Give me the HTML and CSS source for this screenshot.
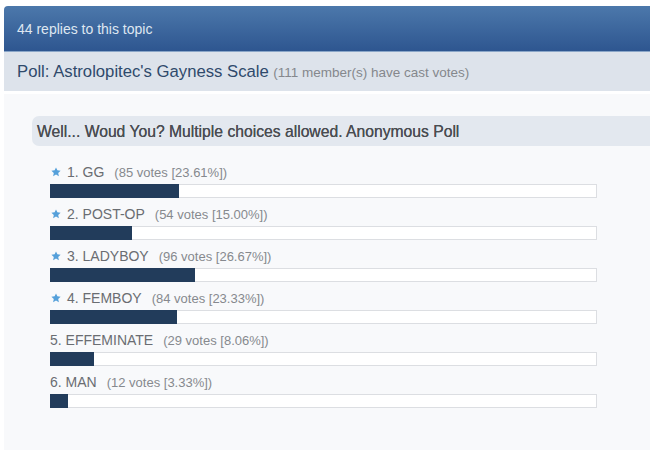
FILE: index.html
```html
<!DOCTYPE html>
<html lang="en">

<head>
    <meta charset="UTF-8">
    <meta name="viewport" content="width=device-width, initial-scale=1.0">
    <title>44 replies to this topic</title>
    <link rel="stylesheet" href="styles.css">
</head>

<body>
    <div class="topic">
        <div class="topic-head">44 replies to this topic</div>
        <div class="poll-title">
            <span class="poll-name">Poll: Astrolopitec's Gayness Scale</span>
            <span class="poll-count">(111 member(s) have cast votes)</span>
        </div>
        <div class="poll-body">
            <div class="question">Well... Woud You? Multiple choices allowed. Anonymous Poll</div>
            <ul class="choices">
                <li class="choice">
                    <div class="choice-label">
                        <svg class="star" viewBox="0 0 10 10"><path d="M5 0.4 6.4 3.3 9.6 3.7 7.2 5.9 7.9 9.2 5 7.6 2.1 9.2 2.8 5.9 0.4 3.7 3.6 3.3Z"/></svg>
                        <span class="choice-name">1. GG</span>
                        <span class="choice-votes">(85 votes [23.61%])</span>
                    </div>
                    <div class="bar"><div class="bar-fill" style="width: 23.61%"></div></div>
                </li>
                <li class="choice">
                    <div class="choice-label">
                        <svg class="star" viewBox="0 0 10 10"><path d="M5 0.4 6.4 3.3 9.6 3.7 7.2 5.9 7.9 9.2 5 7.6 2.1 9.2 2.8 5.9 0.4 3.7 3.6 3.3Z"/></svg>
                        <span class="choice-name">2. POST-OP</span>
                        <span class="choice-votes">(54 votes [15.00%])</span>
                    </div>
                    <div class="bar"><div class="bar-fill" style="width: 15%"></div></div>
                </li>
                <li class="choice">
                    <div class="choice-label">
                        <svg class="star" viewBox="0 0 10 10"><path d="M5 0.4 6.4 3.3 9.6 3.7 7.2 5.9 7.9 9.2 5 7.6 2.1 9.2 2.8 5.9 0.4 3.7 3.6 3.3Z"/></svg>
                        <span class="choice-name">3. LADYBOY</span>
                        <span class="choice-votes">(96 votes [26.67%])</span>
                    </div>
                    <div class="bar"><div class="bar-fill" style="width: 26.67%"></div></div>
                </li>
                <li class="choice">
                    <div class="choice-label">
                        <svg class="star" viewBox="0 0 10 10"><path d="M5 0.4 6.4 3.3 9.6 3.7 7.2 5.9 7.9 9.2 5 7.6 2.1 9.2 2.8 5.9 0.4 3.7 3.6 3.3Z"/></svg>
                        <span class="choice-name">4. FEMBOY</span>
                        <span class="choice-votes">(84 votes [23.33%])</span>
                    </div>
                    <div class="bar"><div class="bar-fill" style="width: 23.33%"></div></div>
                </li>
                <li class="choice">
                    <div class="choice-label">
                        <span class="choice-name">5. EFFEMINATE</span>
                        <span class="choice-votes">(29 votes [8.06%])</span>
                    </div>
                    <div class="bar"><div class="bar-fill" style="width: 8.06%"></div></div>
                </li>
                <li class="choice">
                    <div class="choice-label">
                        <span class="choice-name">6. MAN</span>
                        <span class="choice-votes">(12 votes [3.33%])</span>
                    </div>
                    <div class="bar"><div class="bar-fill" style="width: 3.33%"></div></div>
                </li>
            </ul>
        </div>
    </div>
</body>
</html>
```

FILE: styles.css
```css
body {
    font-family: "Liberation Sans", Arial, sans-serif;
    background-color: #fff;
    margin: 0;
}

.topic {
    margin: 6px 0 0 4px;
}

.topic-head {
    height: 46px;
    line-height: 46px;
    padding-left: 13px;
    font-size: 14px;
    color: #dfe7f1;
    background: linear-gradient(#4c78ab, #2e5690);
    border-radius: 4px 0 0 0;
    border-bottom: 1px solid #8aa6c8;
    box-sizing: border-box;
}

.poll-title {
    height: 39px;
    line-height: 40px;
    padding-left: 13px;
    background-color: #dde3eb;
}

.poll-name {
    font-size: 16.7px;
    color: #2f4a6b;
}

.poll-count {
    font-size: 13.5px;
    color: #85888d;
}

.poll-body {
    margin-top: 3px;
    background-color: #f8f9fb;
    padding: 22px 0 36px 28px;
}

.question {
    height: 30px;
    line-height: 31px;
    padding-left: 5px;
    font-size: 15.7px;
    color: #4a4d52;
    background-color: #e3e8ef;
    border-radius: 7px 0 0 7px;
    text-shadow: 0 0 0.3px #4a4d52;
}

.choices {
    list-style: none;
    margin: 17px 0 0 18px;
    padding: 0;
}

.choice {
    margin-bottom: 7px;
}

.choice-label {
    display: flex;
    align-items: center;
    height: 18px;
    margin-bottom: 3px;
}

.star {
    width: 10px;
    height: 10px;
    margin: 0 6px 0 1px;
    fill: #55a0da;
}

.choice-name {
    font-size: 14px;
    color: #6a6d72;
    margin-right: 10px;
}

.choice-votes {
    font-size: 13px;
    color: #86898e;
}

.bar {
    width: 547px;
    height: 14px;
    box-sizing: border-box;
    border: 1px solid #dcdee2;
    background-color: #fff;
}

.bar-fill {
    height: 14px;
    margin: -1px;
    background-color: #223c5b;
}
```
